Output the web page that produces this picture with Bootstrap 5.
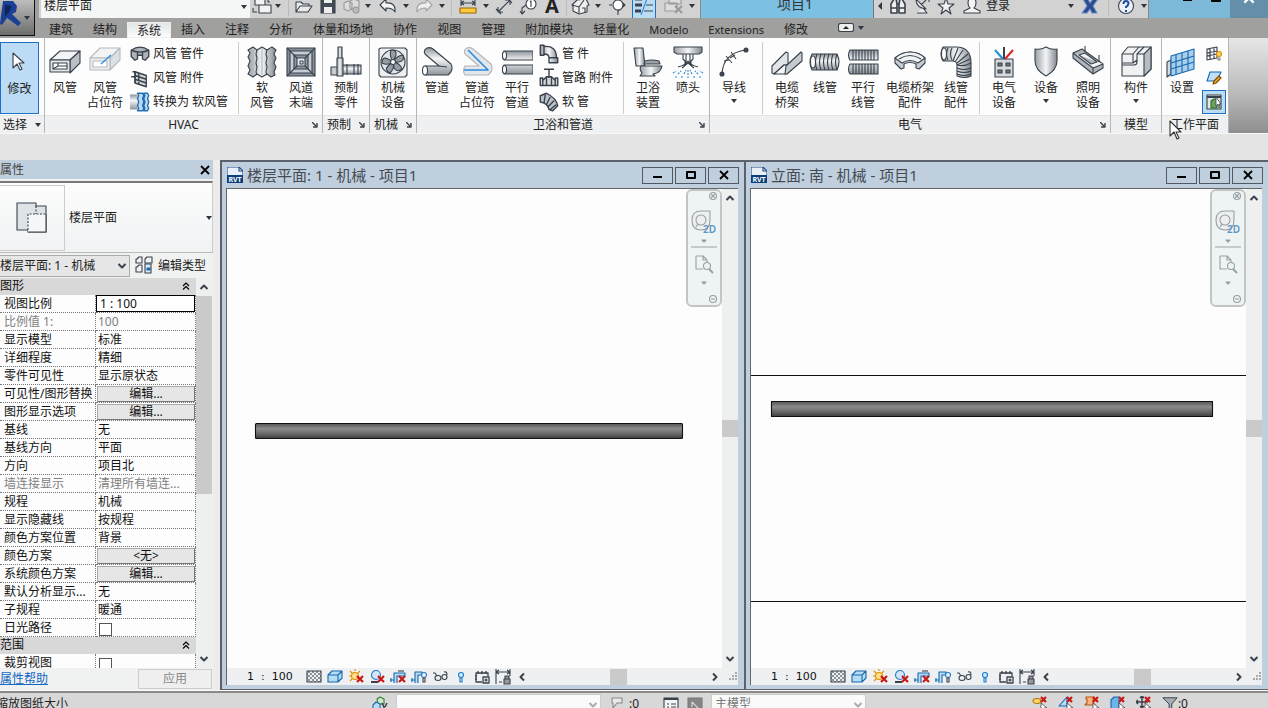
<!DOCTYPE html>
<html lang="zh-CN">
<head>
<meta charset="utf-8">
<meta name="viewport" content="width=device-width, initial-scale=1">
<title>项目1</title>
<link href="https://cdn.jsdelivr.net/npm/bootstrap@5.3.0/dist/css/bootstrap.min.css" rel="stylesheet">
<style>
:root{--ink:#2f3640;--blue:#c0cfdd;--edge:#5b626b;--soft:#eef0f1}
body{font-family:"Noto Sans","Noto Sans CJK SC",sans-serif;font-size:12px;line-height:18px;color:#222;background:#ececec}
button,input,select{font:inherit;color:inherit}
button{border:0;background:none;padding:0}
svg{display:block;flex:none;fill:none;stroke:#39424c;stroke-width:1.1px;stroke-linejoin:round}
.i32{width:32px;height:32px}.i20{width:20px;height:20px}.i16{width:16px;height:16px}
.caret{width:0;height:0;border:3px solid transparent;border-top:4px solid var(--ink);border-bottom:0;flex:none}
/* quick access row, its upper part lies above the window edge */
.app-col{width:39px;background:#a0a09f}
.app-btn{width:35px;height:36px;background:linear-gradient(#bdbdbd,#6d6d6d);border:solid #111;border-width:0 1px 1px 0}
.qat-clip{height:18px;background:#d2d2d3}
.qat{height:26px;margin-top:-7px}
.qat button,.slot{display:flex;align-items:center;justify-content:center;flex:none;height:26px}
.w4{width:4px}.w8{width:8px}.w10{width:10px}.w12{width:12px}.w20{width:20px}.w24{width:24px}.w28{width:28px}.w32{width:32px}
.w36{width:36px}.w40{width:40px}.w44{width:44px}.w48{width:48px}.w46{width:46px}
.vline{width:1px;height:20px;background:#bbb}
.view-pick{width:209px;margin-left:2px;border:0;padding:0 3px;background:#f5f7f7;height:24px;appearance:none;margin-top:-1px}
.pick-wrap{position:relative}
.pick-wrap .caret{position:absolute;right:3px;top:10px}
.letter{font-size:20px;font-weight:700}
.on{background:#bcdcf2;border:1px solid #1c6fc4 !important}
.title-blue{background:#7cc0e3;border-left:1px solid #888}
.doc-title{font-size:14px;color:#333;margin-top:-5px}
.tools{width:276px;background:#d2d2d3;border-left:1px solid #777;border-right:1px solid #888}
.win-ctl{width:119px;background:#7cb9d8}
.win-ctl svg{margin-top:-16px}
.win-close{width:38px;background:#648fa9}
.tabs{height:20px;background:#a0a09f}
.tabs a{padding:3px 10px 0;color:#222;text-decoration:none;line-height:18px}
.tabs a.latin{font-size:11px}
.tabs a.sel{margin:4px 0 0;padding:0 9px;line-height:15px;background:linear-gradient(#e3e5e6,#fcfcfc);border:1px solid #eee}
/* ribbon */
.ribbon{height:95px;background:linear-gradient(#e6e6e6,#bdbdbd 55%,#8e8e8e)}
.panel{background:#fdfdfd;border-right:1px solid #b4b6b8;display:flex;flex-direction:column;flex:none}
.panel-main{height:77px;display:flex;padding-top:4px}
.panel-name{height:18px;background:var(--soft);line-height:17px;text-align:center;position:relative;border-top:1px solid #e2e4e6}
.panel-name svg{position:absolute;right:4px;top:6px}
.big{display:flex;flex-direction:column;align-items:center;line-height:15px;padding-top:4px;white-space:nowrap;flex:none}
.big span{margin-top:2px}
.big .caret{margin-top:4px}
.stack{display:flex;flex-direction:column;flex:none}
.stack button{height:24px;display:flex;align-items:center;gap:3px;text-align:left;white-space:nowrap}
.rule-v{width:1px;height:72px;background:#ccc;flex:none}
.p-sel{width:45px}.p-hvac{width:278px}.p-fab{width:47px}.p-pipe{width:293px}.p-elec{width:401px}.p-model{width:51px}.p-wp{width:67px}
.st-hvac{width:113px;padding-left:5px}.st-pipe{width:86px;padding-left:2px}
.modify{width:39px;height:72px;background:#bcdcf5;border:1px solid #1c6fc4}
.options{height:27px;background:#e4e4e4;border-top:1px solid #f8f8f8}
.pointer{position:absolute;left:1169px;top:120px;z-index:5}
.workspace{min-height:0}
/* properties palette */
.props{width:213px;background:#f0f1f1;flex:none}
.gutter{width:7px;background:#ececec}
.props-title{height:19px;background:var(--blue);color:#444;padding-right:2px}
.type-box{height:72px;margin-top:2px;border:solid #777;border-width:2px 1px 1px 0;border-right-color:#ccc;border-bottom-color:#bbb;background:linear-gradient(#fdfdfd,#f0f2f3)}
.type-pic{width:65px;height:66px;border:1px solid #ccc;border-left:0}
.inst-row{margin:2px 0 1px}
.inst{display:block;width:130px;height:22px;border:1px solid #aaa;border-left:0;background:#e6e6e6;padding:0;appearance:none}
.grid-wrap{flex:1 1 0;min-height:0;overflow:hidden}
.ptable{width:196px;table-layout:fixed;border-collapse:separate;border-spacing:0;background:#fdfdfd;color:#111}
.ptable .c-name{width:96px}.ptable .c-val{width:100px}
.ptable td,.ptable th{height:18px;padding:0 0 0 2px;line-height:17px;white-space:nowrap;overflow:hidden;font-weight:400;border:0 dotted #777;border-width:0 1px 1px 0}
.ptable th{padding-left:4px}
.ptable .grp th{background:#d8d8d8;padding:0 5px 0 0;border-style:solid;border-color:#d8d8d8;height:17px;line-height:16px}
.ptable .off{color:#808080}
.ptable td.ctl{padding:0 0 0 1px}
.ptable td button{display:block;width:98px;height:16px;line-height:14px;background:#e6e6e6;border:1px solid #aaa;border-right-color:#777;border-bottom-color:#777}
.ptable td input[type=text]{display:block;width:99px;height:17px;border:1px solid #000;padding:0 3px;background:#fff}
.ptable input[type=checkbox]{display:block;appearance:none;width:13px;height:13px;border:1px solid #555;margin:3px 0 0 1px;background:#fff}
.vbar{width:16px;background:#eeefef;flex:none}
.vbar svg{margin:0 auto}
.thumb{background:#cacaca}
.ptable + .vbar .thumb{height:198px}
.props-foot{height:22px}
.props-foot a{color:#1268c4}
.apply{width:74px;height:20px;border:1px solid #ccc;color:#888;background:#efefef;margin-right:1px}
/* drawing windows */
.pane{flex:1 1 0;min-width:0;border:solid var(--edge);border-width:2px 0 1px 2px;background:var(--blue);padding:0 6px 4px 4px;display:flex;flex-direction:column}
.pane-title{height:26px;font-size:15px;color:#444b54;margin-right:-1px;padding-left:1px}
.pane-btns{gap:2px}
.pane-title button{width:31px;height:17px;border:1px solid #505964;display:flex;align-items:center;justify-content:center}
.sheet{flex:1 1 0;min-height:0;border:solid #666;border-width:1px 0 0 1px;background:#fdfdfd}
.sheet>.canvas{flex:1;position:relative}
.navbox{position:absolute;right:0;top:0;width:36px;height:118px;border:2px solid #c3c4c6;border-radius:6px;background:#eef4f4}
.vthumb{height:17px}
.viewbar{height:17px;background:var(--soft);border-left:1px solid #666;padding-left:20px}
.scale{width:56px;font-family:"DejaVu Sans","Noto Sans CJK SC",sans-serif;font-size:11px;text-align:left;color:#111;white-space:pre}
.viewbar .slot{width:21px;height:17px}
.hbar{flex:1;height:17px;margin-left:4px}
.hthumb{width:17px;height:16px}
/* status */
.status-clip{height:18px;border-top:1px solid #fafafa;overflow:hidden}
.status{height:24px;border-top:2px solid #8a8a8a;background:#d8d8d8}
.sel-a{width:205px}.sel-b{width:155px}
.status select{display:block;height:20px;border:1px solid #ccc;background:#fafafa;appearance:none;color:#777;padding:0 3px}
.drop{position:relative}
.drop svg{position:absolute;right:3px;top:6px}
.status .drop svg{stroke:#aaa}
.st-text{width:368px;margin-left:-4px;margin-right:4px}
.st-icons{gap:10px}
</style>
</head>
<body class="vh-100 overflow-hidden d-flex flex-column">

<svg class="position-absolute" width="0" height="0" aria-hidden="true">
<defs>
<linearGradient id="m" x1="0" y1="0" x2="0" y2="1"><stop offset="0" stop-color="#8d949b"/><stop offset=".4" stop-color="#f4f5f6"/><stop offset="1" stop-color="#8d949b"/></linearGradient>
<linearGradient id="mh" x1="0" y1="0" x2="1" y2="0"><stop offset="0" stop-color="#9aa0a6"/><stop offset=".5" stop-color="#f4f5f6"/><stop offset="1" stop-color="#80878e"/></linearGradient>
<linearGradient id="pipe" x1="0" y1="0" x2="0" y2="1"><stop offset="0" stop-color="#555"/><stop offset=".35" stop-color="#8b8b8b"/><stop offset=".65" stop-color="#6c6c6c"/><stop offset="1" stop-color="#3d3d3d"/></linearGradient>
<pattern id="chk" width="4" height="4" patternUnits="userSpaceOnUse"><path d="M0 0h2v2H0zM2 2h2v2H2z" fill="#8b9198" stroke="none"/></pattern>
</defs>
<symbol id="duct" viewBox="0 0 32 32"><path d="M1 14L11 5H31L21 14z" fill="#f3f4f5"/><path d="M21 14L31 5V17L21 27z" fill="#b9bfc5"/><path d="M1 14H21V26H1z" fill="#e2e5e7"/><path d="M4 17H18V23H4z" fill="#fff"/><path d="M4 23l5-3h9M9 20v-3"/></symbol>
<symbol id="duct-ph" viewBox="0 0 32 32"><g stroke="#b5babf"><path d="M1 12L11 2H31L21 12z" fill="#f3f4f5"/><path d="M21 12L31 2V14L21 24z" fill="#dde0e3"/><path d="M1 12H21V24H1z" fill="#eceeef"/><path d="M4 15H18V21H4z" fill="#fff"/></g><path d="M12 18L22 9" stroke="#3f92e0" stroke-width="1.6"/></symbol>
<symbol id="duct-fit" viewBox="0 0 16 16"><path d="M1 5q7-5 14 0v5l-3 3-2-1V9H6v3l-2 1-3-3z" fill="#aeb4ba"/><path d="M1 5q7 3 14 0M6 9V6M10 9V6"/></symbol>
<symbol id="duct-acc" viewBox="0 0 16 16"><path d="M4 3l9 3v9l-9-3z" fill="#d3d7da"/><path d="M4 6l9 3M4 9l9 3M2 3h2v9M7 4v9M1 7h3"/></symbol>
<symbol id="conv" viewBox="0 0 16 16"><path d="M0 2h6v12H0z" fill="url(#m)" stroke="none"/><path d="M6 1l1 2-1 2 1 3-1 3 1 2-1 2h4l1-2-1-2 1-3-1-3 1-2-1-2zM11 1l1 2-1 2 1 3-1 3 1 2-1 2h3l1-2-1-2 1-3-1-3 1-2-1-2z" fill="#bfdcf3" stroke="#2070b4"/></symbol>
<symbol id="flex" viewBox="0 0 32 32"><path d="M2 4l5-3 4 3 5-3 5 3 5-3 4 3-2 4 2 4-2 5 2 4-2 5 1 3-4 2-4-3-5 3-5-3-4 3-5-3 2-4-2-4 2-5-2-4 2-4z" fill="url(#mh)"/><path d="M11 4l-1 4 1 4-1 5 1 4-1 5 1 3M21 4l-1 4 1 4-1 5 1 4-1 5 1 3"/><path d="M7 2v27M16 2v27M25 2v27" stroke="#aeb4b9"/></symbol>
<symbol id="diff" viewBox="0 0 32 32"><path d="M2 2h28v28H2z" fill="#88919a"/><path d="M5 5h22v22H5z" fill="#c7cdd2"/><path d="M9 9h14v14H9z" fill="#8d969f"/><path d="M12 12h8v8h-8z" fill="#e8ebed"/><path d="M15 15h3v3h-3zM2 2l10 10M30 2L20 12M2 30l10-10M30 30L20 20"/></symbol>
<symbol id="fab" viewBox="0 0 32 32"><path d="M8 1h4v12H8z" fill="url(#mh)"/><path d="M12 19h19v9H12z" fill="url(#m)"/><path d="M17 18v11M24 18v11M28 18v11"/><path d="M1 21h7v8H1z" fill="#c7ccd1"/><path d="M7 12h6v18H7z" fill="url(#mh)"/></symbol>
<symbol id="fan" viewBox="0 0 32 32"><path d="M2 3l2-1h24l2 2v25l-2 2H4l-2-2z" fill="#eceef0"/><circle cx="16" cy="16" r="12" fill="#e2e5e8"/><path d="M16 16Q12 10 14 4q6 0 5 5zM16 16q3-6 10-7 2 6-4 7zM16 16q7 1 9 7-5 4-8-1zM16 16q2 6-3 11-6-3-2-7zM16 16q-6 4-11 1 0-7 6-4z" fill="#969da4"/><circle cx="16" cy="16" r="2.5" fill="#fff"/></symbol>
<symbol id="pipes" viewBox="0 0 32 32"><path d="M4 20H18L4 8Q2 4 6 2q3-1 6 1L30 18q3 6-3 11H4q-3-4 0-9z" fill="url(#m)"/><path d="M18 20l8 1"/><ellipse cx="4" cy="24.500" rx="2.500" ry="4.500" fill="#fff"/></symbol>
<symbol id="pipes-ph" viewBox="0 0 32 32"><path d="M4 20H18L4 8Q2 4 6 2q3-1 6 1L30 18q3 6-3 11H4q-3-4 0-9z" fill="#e4e7e9" stroke="#b0b6bb"/><path d="M7 4L27 24H3" stroke="#2c8ae0" stroke-width="1.6"/></symbol>
<symbol id="ppipe" viewBox="0 0 32 32"><path d="M3 5h29v9H3q-3-4 0-9zM3 19h29v9H3q-3-4 0-9z" fill="url(#m)"/><ellipse cx="3.500" cy="9.500" rx="2" ry="4" fill="#fff"/><ellipse cx="3.500" cy="23.500" rx="2" ry="4" fill="#fff"/></symbol>
<symbol id="elbow" viewBox="0 0 16 16"><path d="M1 1h3v1q10-1 10 9h1v4H8v-4q0-3-4-3v1H1z" fill="url(#mh)"/><path d="M4 2v6M8 11h6"/></symbol>
<symbol id="valve" viewBox="0 0 16 16"><path d="M4 1h8M8 1v7M1 8h2v6H1zM13 8h2v6h-2zM3 10l3-3h4l3 3v4H3z" fill="#d3d7da"/><path d="M6 7v7M10 7v7"/></symbol>
<symbol id="fpipe" viewBox="0 0 16 16"><path d="M1 3l5-2q8 4 9 10l-4 4-3-1Q7 9 1 8z" fill="#bcc2c7"/><path d="M5 2L4 9M9 4l-3 6M12 7l-5 5M14 10l-5 4"/></symbol>
<symbol id="wc" viewBox="0 0 32 32"><path d="M2 2h9l2 18H4z" fill="url(#mh)"/><path d="M13 15q6-2 14 0l1 3H12z" fill="#9ba2a9"/><path d="M9 20h21q-1 7-9 8l2 2H8l2-3q-3-4-1-7z" fill="url(#mh)"/></symbol>
<symbol id="spr" viewBox="0 0 32 32"><path d="M2 1h28v5l-3 2H5L2 6z" fill="url(#mh)"/><path d="M11 8v5l2 2v3M21 8v5l-2 2v3M14 8v9M18 8v9M6 21q8-2 10-6 2 4 10 6M10 22l6-5 6 5"/><path d="M1 27l3-2M6 28l3-3M12 28l2-4M16 29v-5M20 28l-2-4M26 28l-3-3M31 27l-3-2M3 31h2M9 31h2M15 31h2M21 31h2M27 31h2" stroke="#2c8ae0" stroke-dasharray="2 1"/></symbol>
<symbol id="wire" viewBox="0 0 32 32"><path d="M4 28Q5 7 28 4M8 10l6 7M11 14l-5 1M13 6l5 7M17 9l-5 3"/><circle cx="4" cy="28" r="2" fill="#39424c"/><circle cx="28" cy="4" r="2" fill="#39424c"/></symbol>
<symbol id="tray" viewBox="0 0 32 32"><path d="M1 20L15 6l2 1v12H13L3 28l-2-1z" fill="#e2e5e7"/><path d="M3 28l10-9h6l-4 9z" fill="#f4f5f6"/><path d="M15 20L30 6l1 1v8L16 28h-2z" fill="#c5cacf"/></symbol>
<symbol id="cond" viewBox="0 0 32 32"><path d="M3 8h25q4 8 0 16H3q-4-8 0-16z" fill="url(#m)"/><ellipse cx="4" cy="16" rx="2.500" ry="6" fill="#fff"/><path d="M8 8q-3 8 0 16M12 8q-3 8 0 16M16 8q-3 8 0 16M20 8q-3 8 0 16M24 8q-3 8 0 16M28 8q-3 8 0 16"/></symbol>
<symbol id="pcond" viewBox="0 0 32 32"><path d="M3 4h28v10H3q-3-5 0-10zM3 18h28v10H3q-3-5 0-10z" fill="url(#m)"/><path d="M6 4v10M9 4v10M12 4v10M15 4v10M18 4v10M21 4v10M24 4v10M27 4v10M6 18v10M9 18v10M12 18v10M15 18v10M18 18v10M21 18v10M24 18v10M27 18v10"/></symbol>
<symbol id="trayfit" viewBox="0 0 32 32"><path d="M1 12Q8 6 16 6q9 0 15 6v5l-6 6-3-1v-4q-6-3-12 0v4l-3 1-6-6z" fill="#c7ccd1"/><path d="M1 12Q8 6 16 6q9 0 15 6l-7 5q-8-5-16 0z" fill="#f1f2f3"/><path d="M5 13q11-7 22 0"/></symbol>
<symbol id="condfit" viewBox="0 0 32 32"><path d="M3 1h13q15 0 15 16v13q-6 3-14 0V19q0-4-5-4H3Q-1 8 3 1z" fill="url(#mh)"/><ellipse cx="4" cy="8" rx="2.500" ry="6" fill="#fff"/><path d="M8 2q-3 6 0 12M12 2q-3 6 0 12M18 2l-5 13M23 4l-8 12M28 8l-11 9M30 13l-13 6M17 22q7 3 14 0M17 25q7 3 14 0M17 28q7 3 14 0M31 17q-7 4-14 2"/></symbol>
<symbol id="eleq" viewBox="0 0 32 32"><path d="M7 13h18v18H7z" fill="#d7dadd"/><path d="M10 17h4v3h-4zM18 17h4v3h-4zM10 24h4v3h-4zM18 24h4v3h-4z" fill="#6f777f"/><path d="M16 1v12" stroke-width="2"/><path d="M7 4l8 9" stroke="#1d8fe0" stroke-width="2"/><path d="M25 4l-8 9" stroke="#e02020" stroke-width="2"/></symbol>
<symbol id="shield" viewBox="0 0 32 32"><path d="M5 3q6 1 11-2 5 3 11 2v12q0 9-11 15Q5 24 5 15z" fill="url(#mh)"/></symbol>
<symbol id="lamp" viewBox="0 0 32 32"><path d="M1 7l9-4 21 15v4l-10 6L1 12z" fill="#aeb4ba"/><path d="M1 7l20 15 10-4M7 9l6-2 12 9-6 2z" fill="#f4f5f6"/><path d="M21 22v6M13 0v6M27 9v7"/></symbol>
<symbol id="comp" viewBox="0 0 32 32"><path d="M2 8l6-7h23v22l-7 7H2z" fill="#f0f1f2"/><path d="M24 8l7-7v22l-7 7z" fill="#b7bdc3"/><path d="M24 8h-7v8q0 3-3 3H2M2 8h11v9H2M13 8l6-7M17 8l7-7M13 17l4-3"/></symbol>
<symbol id="setwp" viewBox="0 0 32 32"><path d="M1 16l4-2v14l-4 3z" fill="#d8dadd"/><path d="M5 10L28 3v20L5 30z" fill="#a9cfee" stroke="#1668ad"/><path d="M10 9v19M16 7v19M22 5v19M5 17l23-7M5 23l23-7" stroke="#1668ad"/></symbol>
<symbol id="showwp" viewBox="0 0 16 16"><path d="M1 3l10-2v11L1 14zM4 2v12M8 2v11M1 7l10-2M1 10l10-2"/><circle cx="13" cy="8" r="2.500" fill="#ffd36b" stroke="#e08a00"/><path d="M12 12h2v2h-2z" fill="#eee" stroke="#888"/></symbol>
<symbol id="refpl" viewBox="0 0 16 16"><path d="M4 2h11l-4 9H1z" fill="#bfdff7" stroke="#1668ad"/><path d="M7 14l1-3 5-5 2 2-5 5z" fill="#f5a623" stroke="#7a4a00"/></symbol>
<symbol id="viewer" viewBox="0 0 16 16"><path d="M1 1h14v14H1z" fill="#dfe9e0"/><path d="M1 3h14" stroke-width="2"/><path d="M5 14V7l3-2h3v9z" fill="#6ba05e" stroke="#2f6d2a"/><path d="M10 3v9l2-2 1 4 1-1-1-3h2z" fill="#fff" stroke-width=".8"/></symbol>
<symbol id="arrow" viewBox="0 0 13 20"><path d="M1 1v15l4-4 3 7 2-1-3-6h5z" fill="#fff" stroke="#333"/></symbol>
<symbol id="dlg" viewBox="0 0 6 6"><path d="M0 0l4 4M5 1v4H1" stroke-width="1.4"/></symbol>
<symbol id="open" viewBox="0 0 20 20"><path d="M2 16V6h5l2 2h6v2M2 16l4-6h12l-4 6z" fill="#e8eaec"/></symbol>
<symbol id="save" viewBox="0 0 20 20"><path d="M3 2h13l1 1v14H3z" fill="#414a55"/><path d="M6 11h8v6H6zM6 2h8v5H6z" fill="#eee" stroke="none"/></symbol>
<symbol id="cubes" viewBox="0 0 20 20"><g stroke="#999"><path d="M2 7l4-2 4 2v6l-4 2-4-2zM8 5l4-2 5 2v6l-4 3-5-2z" fill="#dcdcdc"/><circle cx="14" cy="14" r="3" fill="#bbb"/></g></symbol>
<symbol id="undo" viewBox="0 0 20 20"><path d="M2 9l6-6v4q10-1 9 9-2-4-9-4v3z" fill="#f3f3f3"/></symbol>
<symbol id="redo" viewBox="0 0 20 20"><path d="M18 9l-6-6v4Q2 6 3 16q2-4 9-4v3z" fill="#eee" stroke="#a3a3a3"/></symbol>
<symbol id="switch" viewBox="0 0 20 20"><path d="M3 2h10v7H3zM7 9h12v8H7z" fill="#f3f3f3"/><path d="M1 12v4h4M16 1v5h2"/></symbol>
<symbol id="meas" viewBox="0 0 20 20"><path d="M3 7h14M3 4v6M17 4v6M6 5L3 7l3 2M14 5l3 2-3 2"/><path d="M2 12h16v5H2z" fill="#ffc83d" stroke="#9a6a00"/></symbol>
<symbol id="dim" viewBox="0 0 20 20"><path d="M4 16L16 4M11 4h5v5M9 16H4v-5M2 13l5 5M13 2l5 5"/></symbol>
<symbol id="tag" viewBox="0 0 20 20"><circle cx="13" cy="8" r="5" fill="#fff"/><path d="M8 9L4 12v5M2 15l2 3 3-3M12 6l1-1v6"/></symbol>
<symbol id="home" viewBox="0 0 20 20"><path d="M2 9l5-5 9-1 3 6-2 1v6l-8 2-6-3V9z" fill="#eee"/><path d="M2 9l7 2 5-7M9 11v6M12 12h3v4"/></symbol>
<symbol id="sect" viewBox="0 0 20 20"><path d="M10 3l7 6-7 6zM10 14v5M4 9H1" fill="#39424c"/><circle cx="10" cy="9" r="5" fill="#fff"/></symbol>
<symbol id="thin" viewBox="0 0 20 20"><path d="M1 3h7M1 9h7M1 15h6" stroke-width="3"/><path d="M12 3h7M12 9h7M10 15h9"/><path d="M14 0L7 19" stroke="#2c8ae0"/></symbol>
<symbol id="hid" viewBox="0 0 20 20"><g stroke="#999"><path d="M5 1h12v7H5zM1 7h12v8H1z" fill="#ddd"/><path d="M11 10l7 7M18 10l-7 7" stroke-width="2"/></g></symbol>
<symbol id="bino" viewBox="0 0 20 20"><path d="M3 17V8l3-5h2l1 5v9zM17 17V8l-3-5h-2l-1 5v9zM3 12h6M11 12h6M9 8h2" fill="#eee" stroke-width="1.600"/></symbol>
<symbol id="dish" viewBox="0 0 20 20"><path d="M4 3q0 9 10 10zM5 17h10l-4-5M9 9l6-6M13 2h4v4" fill="#eee"/></symbol>
<symbol id="star" viewBox="0 0 20 20"><path d="M10 2l2 6h6l-5 4 2 6-5-4-5 4 2-6-5-4h6z" fill="#f3f3f3"/></symbol>
<symbol id="user" viewBox="0 0 20 20"><path d="M10 2q4 0 4 5 0 3-2 5l6 3v2H2v-2l6-3Q6 10 6 7q0-5 4-5z" fill="#f3f3f3"/></symbol>
<symbol id="exch" viewBox="0 0 20 20"><path d="M3 3h5l2 4 3-4h5l-5 7 4 7h-5l-2-4-3 4H2l5-7z" fill="#284d91" stroke="#6e8cc2"/></symbol>
<symbol id="help" viewBox="0 0 20 20"><circle cx="10" cy="10" r="7.500" fill="#eef2f8"/><path d="M7.500 8q0-3 2.500-3t2.500 2.500Q12.500 9 10 11v1M10 14v2" stroke="#1c4fa4" stroke-width="2"/></symbol>
<symbol id="up" viewBox="0 0 10 10"><path d="M1.500 7L5 3.500 8.500 7" stroke-width="2"/></symbol>
<symbol id="down" viewBox="0 0 10 10"><path d="M1.500 3L5 6.500 8.500 3" stroke-width="2"/></symbol>
<symbol id="left" viewBox="0 0 10 10"><path d="M7 1.500L3.500 5 7 8.500" stroke-width="2"/></symbol>
<symbol id="right" viewBox="0 0 10 10"><path d="M3 1.500L6.500 5 3 8.500" stroke-width="2"/></symbol>
<symbol id="fold" viewBox="0 0 8 8"><path d="M1 4l3-3 3 3M1 7.500l3-3 3 3" stroke="#000"/></symbol>
<symbol id="min" viewBox="0 0 12 12"><path d="M1 8h9" stroke="#000" stroke-width="2"/></symbol>
<symbol id="max" viewBox="0 0 12 12"><path d="M2 3h8v6H2z" stroke="#000" stroke-width="2"/></symbol>
<symbol id="x" viewBox="0 0 12 12"><path d="M2 2l8 8M10 2l-8 8" stroke="#000" stroke-width="1.800"/></symbol>
<symbol id="rvt" viewBox="0 0 16 16"><path d="M0 0h12l4 4v12H0z" fill="#e9eff6" stroke="#164a86"/><path d="M0 8h16v8H0z" fill="#0c3f7d" stroke="none"/><path d="M12 0v4h4" stroke="#164a86"/><text x="8" y="14.500" font-size="7" font-weight="700" text-anchor="middle" fill="#fff" stroke="none">RVT</text></symbol>
<symbol id="v1" viewBox="0 0 16 16"><path d="M1 2h14v11H1z" fill="url(#chk)"/></symbol>
<symbol id="v2" viewBox="0 0 16 16"><path d="M1 6l4-4h10v7l-4 4H1zM1 6h10v7M11 6l4-4" fill="#b9dcf5" stroke="#1668ad"/></symbol>
<symbol id="redx" viewBox="0 0 16 16"><path d="M9 7l6 6M15 7l-6 6" stroke="#c81818" stroke-width="2.200"/></symbol>
<symbol id="v3" viewBox="0 0 16 16"><circle cx="7" cy="7" r="3.500" fill="#ffe08a" stroke="#e09000"/><path d="M7 0v2M1 7h2M2 2l2 2M12 2l-2 2M2 12l2-2" stroke="#e09000"/><use href="#redx"/></symbol>
<symbol id="v4" viewBox="0 0 16 16"><circle cx="7" cy="6" r="4.500" fill="#cfe7f8" stroke="#2a7ac0"/><path d="M2 13h7" stroke-width="2"/><use href="#redx"/></symbol>
<symbol id="v5" viewBox="0 0 16 16"><path d="M0 11h4M4 14V4h11v3H7v7M1 9v4" stroke="#1668ad" fill="#b9dcf5"/><path d="M8 2h6"/><use href="#redx"/></symbol>
<symbol id="v6" viewBox="0 0 16 16"><path d="M0 11h4M4 14V3h7v3H7v8M1 9v4" stroke="#1668ad" fill="#b9dcf5"/><circle cx="13" cy="6" r="2.500" fill="#e7f3fc" stroke="#2a7ac0"/><path d="M12 9h2v4h-2z"/></symbol>
<symbol id="v7" viewBox="0 0 16 16"><path d="M1 4h2l2 3M15 6q0-4-3-3"/><ellipse cx="6" cy="9" rx="3" ry="2.500"/><ellipse cx="12.500" cy="8" rx="2.500" ry="2.500"/></symbol>
<symbol id="v8" viewBox="0 0 16 16"><circle cx="8" cy="6" r="2.500" fill="#d4eafa" stroke="#1c7cd0"/><path d="M7 9h2v4H7z" stroke="#1c7cd0"/></symbol>
<symbol id="v9" viewBox="0 0 16 16"><path d="M8 13H2V4h12v3M4 2v3M8 2v3M12 2v3M1 7h2M1 10h2M9 8h6v6H9z" stroke-width="1.300"/><circle cx="12" cy="11" r="1"/></symbol>
<symbol id="v10" viewBox="0 0 16 16"><path d="M1 0v15M15 0v7M1 3h14M4 1L1 3l3 2M12 1l3 2-3 2M4 13h3"/><path d="M9 10h6v5H9zM10 10V7h4v3" fill="#999"/></symbol>
<symbol id="grip" viewBox="0 0 10 10"><path d="M7 1h2M7 4h2M4 4h2M1 7h2M4 7h2M7 7h2" stroke="#aaa" stroke-width="2"/></symbol>
<symbol id="nav" viewBox="0 0 32 114"><g stroke="#999fa5"><circle cx="25" cy="5" r="3.500"/><path d="M23 3l4 4M27 3l-4 4M13 20h9v9q0 10-9 10t-9-10q0-9 9-9z" fill="#eceeef"/><circle cx="13" cy="29" r="5"/><path d="M8 36l2-3M3 56h26"/><path d="M15 78H8V65h7l4 4v2M15 65v4h4"/><circle cx="19" cy="75" r="3.500"/><path d="M21 78l4 4" stroke-width="2"/><circle cx="25" cy="108" r="3.500"/><path d="M23 108h4"/><path d="M14 49h4l-2 2zM14 91h4l-2 2z" fill="#888"/></g><text x="15" y="42" font-size="10" font-weight="600" fill="#5e94c2" stroke="none">2D</text></symbol>
<symbol id="planpic" viewBox="0 0 32 32"><path d="M1 1h19v3h10v26H12v-2H1z" fill="#e0e3e6"/><path d="M12 12h18v18H12z" fill="#f6f7f8" stroke="none"/><path d="M20 4v8M12 28V12h18" stroke-dasharray="2 1.500"/><path d="M30 12v18H12"/></symbol>
<symbol id="etype" viewBox="0 0 20 20"><path d="M3 3l2-2h3v6H2V3zM11 3l2-2h5v6h-7zM3 11l2-2h3v7H2v-5z"/><path d="M11 8h6v9h-6z" fill="#dcebf7"/><path d="M13 12h3v2h-3z" fill="#1668ad" stroke="#1668ad"/></symbol>
<symbol id="share" viewBox="0 0 16 16"><path d="M5 3l3-2 4 2v5H6z" fill="#cfe8cf" stroke="#2f7d2a"/><path d="M1 9l3-3 4 2v6H1z" fill="#b9dcf5" stroke="#1668ad"/><path d="M10 7l2 4v5M15 7l-2 4" stroke-width="1.500"/></symbol>
<symbol id="note" viewBox="0 0 16 16"><path d="M3 2h10v5H8l-4 5V7H3z" fill="#e8e8e8" stroke="#888"/></symbol>
<symbol id="list" viewBox="0 0 16 16"><path d="M1 2h14v13H1zM4 8h2M8 8h5M4 11h2M8 11h5" fill="#f4f4f4"/><path d="M1 3h14" stroke-width="2"/></symbol>
<symbol id="dark" viewBox="0 0 16 16"><path d="M1 2h14v14H1z" fill="#858585" stroke="#777"/><path d="M5 6l7 7M5 6v5" stroke="#ddd"/></symbol>
<symbol id="ptr" viewBox="0 0 16 16"><path d="M9 7v8l2-2 1 3h1l-1-4h3z" fill="#fff" stroke-width=".8"/><path d="M9 1l5 5M14 1L9 6" stroke="#c81818" stroke-width="2.200"/></symbol>
<symbol id="s1" viewBox="0 0 16 16"><ellipse cx="5" cy="5" rx="4" ry="2.500" fill="#ffd36b" stroke="#b07a00"/><use href="#ptr"/></symbol>
<symbol id="s2" viewBox="0 0 16 16"><path d="M1 10L9 1v9z" fill="#b9dcf5" stroke="#1668ad"/><use href="#ptr"/></symbol>
<symbol id="s3" viewBox="0 0 16 16"><path d="M2 1h8v2H9v4l2 2H1l2-2V3H2z" fill="#ffb27a" stroke="#b35412"/><use href="#ptr"/></symbol>
<symbol id="s4" viewBox="0 0 16 16"><path d="M1 4l3-3h5v12H1z" fill="#6fb4e8" stroke="#1668ad"/><use href="#ptr"/></symbol>
<symbol id="s5" viewBox="0 0 16 16"><path d="M6 0v12M0 6h12M4 2l2-2 2 2M4 10l2 2 2-2M2 4L0 6l2 2" stroke-width="1.500"/><use href="#ptr"/></symbol>
<symbol id="s6" viewBox="0 0 18 16"><path d="M1 1h16l-6 7v6H8V8z" fill="#a6adb4"/></symbol>
</svg>

<header class="d-flex flex-shrink-0">
  <div class="app-col flex-shrink-0"><button class="app-btn d-flex align-items-center" aria-label="应用程序菜单">
    <svg width="24" height="34" viewBox="0 0 24 34"><path d="M3 0h10l4 5-1 6-4 2 9 9-3 3-11-8-5 7-2-1z" fill="#1c3f96" stroke="none"/><path d="M5 4l7 1-3 6-4 5z" fill="#0d235c" stroke="none"/></svg><i class="caret"></i></button></div>
  <div class="flex-grow-1">
    <div class="qat-clip overflow-hidden">
    <div class="qat d-flex align-items-center">
      <div class="pick-wrap"><select class="view-pick" aria-label="视图"><option>楼层平面</option></select><i class="caret"></i></div>
      <button class="w24" aria-label="切换窗口"><svg class="i20"><use href="#switch"/></svg></button><button class="w8" aria-label="更多"><i class="caret"></i></button>
      <span class="slot w12"><i class="vline"></i></span>
      <button class="w20" aria-label="打开"><svg class="i20"><use href="#open"/></svg></button>
      <button class="w28" aria-label="保存"><svg class="i20"><use href="#save"/></svg></button>
      <button class="w20" aria-label="同步"><svg class="i20"><use href="#cubes"/></svg></button><button class="w12" aria-label="更多"><i class="caret"></i></button>
      <button class="w28" aria-label="放弃"><svg class="i20"><use href="#undo"/></svg></button><button class="w8" aria-label="更多"><i class="caret"></i></button>
      <button class="w28" aria-label="重做"><svg class="i20"><use href="#redo"/></svg></button><button class="w8" aria-label="更多"><i class="caret"></i></button>
      <span class="slot w10"><i class="vline"></i></span>
      <button class="w24" aria-label="测量"><svg class="i20"><use href="#meas"/></svg></button><button class="w12" aria-label="更多"><i class="caret"></i></button>
      <button class="w24" aria-label="尺寸标注"><svg class="i20"><use href="#dim"/></svg></button>
      <button class="w24" aria-label="标记"><svg class="i20"><use href="#tag"/></svg></button>
      <button class="w24 letter" aria-label="文字">A</button>
      <span class="slot w4"><i class="vline"></i></span>
      <button class="w24" aria-label="三维视图"><svg class="i20"><use href="#home"/></svg></button><button class="w12" aria-label="更多"><i class="caret"></i></button>
      <button class="w28" aria-label="剖面"><svg class="i20"><use href="#sect"/></svg></button>
      <button class="w24 on" aria-label="细线"><svg class="i20"><use href="#thin"/></svg></button>
      <span class="slot w4"></span>
      <button class="w28" aria-label="关闭隐藏窗口"><svg class="i20"><use href="#hid"/></svg></button><button class="w8" aria-label="自定义"><i class="caret"></i></button>
      <span class="slot w4"></span>
      <div class="title-blue h-100 flex-grow-1 d-flex align-items-center justify-content-center"><span class="doc-title ps-3">项目1</span></div>
      <div class="tools h-100 d-flex align-items-center">
        <button class="w12" aria-label="折叠"><svg width="6" height="8" viewBox="0 0 6 8"><path d="M5 0v8L1 4z" fill="#2f3640" stroke="none"/></svg></button>
        <button class="w24" aria-label="搜索"><svg class="i20"><use href="#bino"/></svg></button>
        <button class="w24" aria-label="通讯中心"><svg class="i20"><use href="#dish"/></svg></button>
        <button class="w24" aria-label="收藏夹"><svg class="i20"><use href="#star"/></svg></button>
        <button class="flex-grow-1 justify-content-start"><svg class="i20 mx-1"><use href="#user"/></svg>登录</button>
        <button class="w10" aria-label="更多"><i class="caret"></i></button>
        <button class="w28" aria-label="Exchange"><svg class="i20"><use href="#exch"/></svg></button>
        <span class="slot w8"><i class="vline"></i></span>
        <button class="w28" aria-label="帮助"><svg class="i20"><use href="#help"/></svg></button>
        <button class="w8" aria-label="更多"><i class="caret"></i></button>
      </div>
      <div class="win-ctl h-100 d-flex justify-content-end align-items-center">
        <button class="w28" aria-label="最小化"><svg width="12" height="12"><use href="#min"/></svg></button>
        <button class="w28" aria-label="最大化"><svg width="12" height="12"><use href="#max"/></svg></button>
        <button class="win-close" aria-label="关闭"><svg width="14" height="14" viewBox="0 0 12 12"><path d="M2 2l8 8M10 2l-8 8" stroke="#fff" stroke-width="2"/></svg></button>
      </div>
    </div></div>
    <nav class="tabs d-flex">
      <a href="#">建筑</a><a href="#">结构</a><a href="#" class="sel">系统</a><a href="#">插入</a><a href="#">注释</a><a href="#">分析</a><a href="#">体量和场地</a><a href="#">协作</a><a href="#">视图</a><a href="#">管理</a><a href="#">附加模块</a><a href="#">轻量化</a><a href="#" class="latin">Modelo</a><a href="#" class="latin">Extensions</a><a href="#">修改</a>
      <button class="d-flex align-items-center gap-1 ms-3 ps-1" aria-label="最小化功能区"><svg width="16" height="10" viewBox="0 0 16 10"><rect x=".5" y=".5" width="15" height="8" rx="2" fill="#eee"/><path d="M5 6h6L8 3z" fill="#222" stroke="none"/></svg><i class="caret"></i></button>
    </nav>
  </div>
</header>

<section class="ribbon d-flex flex-shrink-0">
  <div class="panel p-sel"><div class="panel-main"><button class="big modify"><svg class="i32" viewBox="-8 -5 32 32"><path d="M1 1v15l4-4 3 6 2-1-3-6h5z" fill="#fff"/></svg><span>修改</span></button></div><div class="panel-name d-flex align-items-center justify-content-center gap-1">选择<i class="caret ms-1"></i></div></div>
  <div class="panel p-hvac"><div class="panel-main">
    <button class="big w40"><svg class="i32"><use href="#duct"/></svg><span>风管</span></button>
    <button class="big w40"><svg class="i32"><use href="#duct-ph"/></svg><span>风管<br>占位符</span></button>
    <div class="stack st-hvac"><button><svg class="i20"><use href="#duct-fit"/></svg>风管 管件</button><button><svg class="i20"><use href="#duct-acc"/></svg>风管 附件</button><button><svg class="i20"><use href="#conv"/></svg>转换为 软风管</button></div>
    <i class="rule-v"></i>
    <button class="big w46"><svg class="i32"><use href="#flex"/></svg><span>软<br>风管</span></button>
    <button class="big w32"><svg class="i32"><use href="#diff"/></svg><span>风道<br>末端</span></button>
  </div><div class="panel-name">HVAC<svg width="6" height="6"><use href="#dlg"/></svg></div></div>
  <div class="panel p-fab"><div class="panel-main"><button class="big w46"><svg class="i32"><use href="#fab"/></svg><span>预制<br>零件</span></button></div><div class="panel-name text-start ps-1">预制<svg width="6" height="6"><use href="#dlg"/></svg></div></div>
  <div class="panel p-fab"><div class="panel-main"><button class="big w46"><svg class="i32"><use href="#fan"/></svg><span>机械<br>设备</span></button></div><div class="panel-name text-start ps-1">机械<svg width="6" height="6"><use href="#dlg"/></svg></div></div>
  <div class="panel p-pipe"><div class="panel-main">
    <button class="big w40"><svg class="i32"><use href="#pipes"/></svg><span>管道</span></button>
    <button class="big w40"><svg class="i32"><use href="#pipes-ph"/></svg><span>管道<br>占位符</span></button>
    <button class="big w40"><svg class="i32"><use href="#ppipe"/></svg><span>平行<br>管道</span></button>
    <div class="stack st-pipe"><button><svg class="i20"><use href="#elbow"/></svg>管 件</button><button><svg class="i20"><use href="#valve"/></svg>管路 附件</button><button><svg class="i20"><use href="#fpipe"/></svg>软 管</button></div>
    <i class="rule-v"></i>
    <button class="big w48"><svg class="i32"><use href="#wc"/></svg><span>卫浴<br>装置</span></button>
    <button class="big w32"><svg class="i32"><use href="#spr"/></svg><span>喷头</span></button>
  </div><div class="panel-name">卫浴和管道<svg width="6" height="6"><use href="#dlg"/></svg></div></div>
  <div class="panel p-elec"><div class="panel-main">
    <button class="big w48"><svg class="i32"><use href="#wire"/></svg><span>导线</span><i class="caret"></i></button>
    <i class="rule-v ms-1"></i>
    <button class="big w48"><svg class="i32"><use href="#tray"/></svg><span>电缆<br>桥架</span></button>
    <button class="big w28"><svg class="i32"><use href="#cond"/></svg><span>线管</span></button>
    <button class="big w48"><svg class="i32"><use href="#pcond"/></svg><span>平行<br>线管</span></button>
    <button class="big w46"><svg class="i32"><use href="#trayfit"/></svg><span>电缆桥架<br>配件</span></button>
    <button class="big w46"><svg class="i32"><use href="#condfit"/></svg><span>线管<br>配件</span></button>
    <i class="rule-v"></i>
    <button class="big w48"><svg class="i32"><use href="#eleq"/></svg><span>电气<br>设备</span></button>
    <button class="big w36"><svg class="i32"><use href="#shield"/></svg><span>设备</span><i class="caret"></i></button>
    <button class="big w48"><svg class="i32"><use href="#lamp"/></svg><span>照明<br>设备</span></button>
  </div><div class="panel-name">电气<svg width="6" height="6"><use href="#dlg"/></svg></div></div>
  <div class="panel p-model"><div class="panel-main justify-content-center"><button class="big w48"><svg class="i32"><use href="#comp"/></svg><span>构件</span><i class="caret"></i></button></div><div class="panel-name">模型</div></div>
  <div class="panel p-wp"><div class="panel-main">
    <button class="big w40"><svg class="i32"><use href="#setwp"/></svg><span>设置</span></button>
    <div class="stack"><button class="w24 justify-content-center" aria-label="显示"><svg class="i16"><use href="#showwp"/></svg></button><button class="w24 justify-content-center" aria-label="参照平面"><svg class="i16"><use href="#refpl"/></svg></button><button class="w24 on justify-content-center" aria-label="查看器"><svg class="i16"><use href="#viewer"/></svg></button></div>
  </div><div class="panel-name">工作平面</div></div>
</section>
<svg class="pointer" width="13" height="20"><use href="#arrow"/></svg>
<div class="options flex-shrink-0"></div>

<main class="workspace d-flex flex-grow-1">
  <aside class="props d-flex flex-column">
    <div class="props-title d-flex justify-content-between align-items-center"><span>属性</span><button aria-label="关闭"><svg width="12" height="12"><use href="#x"/></svg></button></div>
    <div class="type-box d-flex align-items-center"><div class="type-pic d-flex align-items-center justify-content-center"><svg class="i32"><use href="#planpic"/></svg></div><span class="ps-1 flex-grow-1">楼层平面</span><i class="caret"></i></div>
    <div class="inst-row d-flex align-items-center gap-1">
      <div class="drop"><select class="inst" aria-label="实例"><option>楼层平面: 1 - 机械</option></select><svg width="10" height="10"><use href="#down"/></svg></div>
      <button class="d-flex align-items-center gap-1"><svg class="i20"><use href="#etype"/></svg>编辑类型</button>
    </div>
    <div class="grid-wrap d-flex align-items-start">
      <table class="ptable">
        <colgroup><col class="c-name"><col class="c-val"></colgroup>
        <tbody>
        <tr class="grp"><th colspan="2"><div class="d-flex justify-content-between align-items-center">图形<svg width="8" height="8"><use href="#fold"/></svg></div></th></tr>
        <tr><th><label for="sc">视图比例</label></th><td class="p-0"><input type="text" id="sc" value="1 : 100"></td></tr>
        <tr class="off"><th>比例值 1:</th><td>100</td></tr>
        <tr><th>显示模型</th><td>标准</td></tr>
        <tr><th>详细程度</th><td>精细</td></tr>
        <tr><th>零件可见性</th><td>显示原状态</td></tr>
        <tr><th>可见性/图形替换</th><td class="ctl"><button>编辑...</button></td></tr>
        <tr><th>图形显示选项</th><td class="ctl"><button>编辑...</button></td></tr>
        <tr><th>基线</th><td>无</td></tr>
        <tr><th>基线方向</th><td>平面</td></tr>
        <tr><th>方向</th><td>项目北</td></tr>
        <tr class="off"><th>墙连接显示</th><td>清理所有墙连...</td></tr>
        <tr><th>规程</th><td>机械</td></tr>
        <tr><th>显示隐藏线</th><td>按规程</td></tr>
        <tr><th>颜色方案位置</th><td>背景</td></tr>
        <tr><th>颜色方案</th><td class="ctl"><button>&lt;无&gt;</button></td></tr>
        <tr><th>系统颜色方案</th><td class="ctl"><button>编辑...</button></td></tr>
        <tr><th>默认分析显示...</th><td>无</td></tr>
        <tr><th>子规程</th><td>暖通</td></tr>
        <tr><th><label for="sun">日光路径</label></th><td><input type="checkbox" id="sun"></td></tr>
        <tr class="grp"><th colspan="2"><div class="d-flex justify-content-between align-items-center">范围<svg width="8" height="8"><use href="#fold"/></svg></div></th></tr>
        <tr><th><label for="crop">裁剪视图</label></th><td><input type="checkbox" id="crop"></td></tr>
        </tbody>
      </table>
      <div class="vbar h-100 d-flex flex-column pt-1 pb-1"><svg width="10" height="10"><use href="#up"/></svg><div class="thumb mt-1"></div><svg class="mt-auto" width="10" height="10"><use href="#down"/></svg></div>
    </div>
    <div class="props-foot d-flex justify-content-between align-items-center"><a href="#">属性帮助</a><button class="apply" disabled>应用</button></div>
  </aside>
  <div class="gutter flex-shrink-0"></div>

  <section class="pane">
    <div class="pane-title d-flex align-items-center"><svg class="i16"><use href="#rvt"/></svg><span class="ps-1 flex-grow-1">楼层平面: 1 - 机械 - 项目1</span><div class="pane-btns d-flex"><button aria-label="最小化"><svg width="12" height="12"><use href="#min"/></svg></button><button aria-label="最大化"><svg width="12" height="12"><use href="#max"/></svg></button><button aria-label="关闭"><svg width="12" height="12"><use href="#x"/></svg></button></div></div>
    <div class="sheet d-flex">
      <div class="canvas"><svg width="100%" height="100%"><rect x="28.500" y="234.500" width="427" height="15" rx="1" fill="url(#pipe)" stroke="#111"/></svg>
        <div class="navbox"><svg width="32" height="114"><use href="#nav"/></svg></div></div>
      <div class="vbar d-flex flex-column pt-1 pb-1"><svg width="10" height="10"><use href="#up"/></svg><div class="thumb vthumb my-auto"></div><svg width="10" height="10"><use href="#down"/></svg></div>
    </div>
    <div class="viewbar d-flex align-items-center"><button class="scale">1  :  100</button>
      <span class="d-flex"><button class="slot" aria-label="详细程度"><svg class="i16"><use href="#v1"/></svg></button><button class="slot" aria-label="视觉样式"><svg class="i16"><use href="#v2"/></svg></button><button class="slot" aria-label="日光路径"><svg class="i16"><use href="#v3"/></svg></button><button class="slot" aria-label="阴影"><svg class="i16"><use href="#v4"/></svg></button><button class="slot" aria-label="裁剪视图"><svg class="i16"><use href="#v5"/></svg></button><button class="slot" aria-label="显示裁剪区域"><svg class="i16"><use href="#v6"/></svg></button><button class="slot" aria-label="临时隐藏"><svg class="i16"><use href="#v7"/></svg></button><button class="slot" aria-label="显示隐藏的图元"><svg class="i16"><use href="#v8"/></svg></button><button class="slot" aria-label="临时视图属性"><svg class="i16"><use href="#v9"/></svg></button><button class="slot" aria-label="显示约束"><svg class="i16"><use href="#v10"/></svg></button></span>
      <div class="hbar d-flex align-items-center justify-content-between"><svg width="10" height="10"><use href="#left"/></svg><div class="thumb hthumb"></div><svg width="10" height="10"><use href="#right"/></svg></div><svg class="ms-2" width="10" height="10"><use href="#grip"/></svg></div>
  </section>

  <section class="pane">
    <div class="pane-title d-flex align-items-center"><svg class="i16"><use href="#rvt"/></svg><span class="ps-1 flex-grow-1">立面: 南 - 机械 - 项目1</span><div class="pane-btns d-flex"><button aria-label="最小化"><svg width="12" height="12"><use href="#min"/></svg></button><button aria-label="最大化"><svg width="12" height="12"><use href="#max"/></svg></button><button aria-label="关闭"><svg width="12" height="12"><use href="#x"/></svg></button></div></div>
    <div class="sheet d-flex">
      <div class="canvas"><svg width="100%" height="100%"><path d="M0 186.500h2000M0 412.500h2000" stroke="#111"/><rect x="20.500" y="212.500" width="441" height="15" fill="url(#pipe)" stroke="#111"/></svg>
        <div class="navbox"><svg width="32" height="114"><use href="#nav"/></svg></div></div>
      <div class="vbar d-flex flex-column pt-1 pb-1"><svg width="10" height="10"><use href="#up"/></svg><div class="thumb vthumb my-auto"></div><svg width="10" height="10"><use href="#down"/></svg></div>
    </div>
    <div class="viewbar d-flex align-items-center"><button class="scale">1  :  100</button>
      <span class="d-flex"><button class="slot" aria-label="详细程度"><svg class="i16"><use href="#v1"/></svg></button><button class="slot" aria-label="视觉样式"><svg class="i16"><use href="#v2"/></svg></button><button class="slot" aria-label="日光路径"><svg class="i16"><use href="#v3"/></svg></button><button class="slot" aria-label="阴影"><svg class="i16"><use href="#v4"/></svg></button><button class="slot" aria-label="裁剪视图"><svg class="i16"><use href="#v5"/></svg></button><button class="slot" aria-label="显示裁剪区域"><svg class="i16"><use href="#v6"/></svg></button><button class="slot" aria-label="临时隐藏"><svg class="i16"><use href="#v7"/></svg></button><button class="slot" aria-label="显示隐藏的图元"><svg class="i16"><use href="#v8"/></svg></button><button class="slot" aria-label="临时视图属性"><svg class="i16"><use href="#v9"/></svg></button><button class="slot" aria-label="显示约束"><svg class="i16"><use href="#v10"/></svg></button></span>
      <div class="hbar d-flex align-items-center justify-content-between"><svg width="10" height="10"><use href="#left"/></svg><div class="thumb hthumb"></div><svg width="10" height="10"><use href="#right"/></svg></div><svg class="ms-2" width="10" height="10"><use href="#grip"/></svg></div>
  </section>
</main>

<footer class="status-clip flex-shrink-0">
  <div class="status d-flex align-items-center">
    <span class="st-text">缩放图纸大小</span>
    <button class="w24 d-flex justify-content-center" aria-label="工作共享"><svg class="i16"><use href="#share"/></svg></button>
    <div class="drop ms-1"><select class="sel-a" aria-label="工作集"><option></option></select><svg width="10" height="10"><use href="#down"/></svg></div>
    <button class="d-flex align-items-center gap-1 ms-2 w46"><svg class="i16"><use href="#note"/></svg>:0</button>
    <button class="w24 ms-2" aria-label="设计选项"><svg class="i16"><use href="#list"/></svg></button>
    <button class="w24" aria-label="添加到集"><svg class="i16"><use href="#dark"/></svg></button>
    <div class="drop"><select class="sel-b" aria-label="主模型"><option>主模型</option></select><svg width="10" height="10"><use href="#down"/></svg></div>
    <div class="st-icons ms-auto d-flex pe-2 me-5"><button aria-label="选择链接"><svg class="i16"><use href="#s1"/></svg></button><button aria-label="选择基线图元"><svg class="i16"><use href="#s2"/></svg></button><button aria-label="选择锁定图元"><svg class="i16"><use href="#s3"/></svg></button><button aria-label="按面选择"><svg class="i16"><use href="#s4"/></svg></button><button aria-label="拖曳图元"><svg class="i16"><use href="#s5"/></svg></button><button class="d-flex align-items-center me-4"><svg class="i16"><use href="#s6"/></svg>:0</button></div>
  </div>
</footer>
<script src="https://cdn.jsdelivr.net/npm/bootstrap@5.3.0/dist/js/bootstrap.bundle.min.js"></script>
</body>
</html>
